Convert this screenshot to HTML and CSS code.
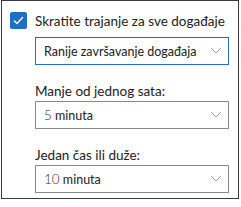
FILE: index.html
```html
<!DOCTYPE html>
<html lang="sr">

<head>
    <meta charset="UTF-8">
    <meta name="viewport" content="width=device-width, initial-scale=1.0">
    <title>Skratite trajanje</title>
    <link rel="stylesheet" href="styles.css">
</head>

<body>
    <div class="panel">
        <label class="check-row">
            <span class="checkbox">
                <svg width="11" height="9" viewBox="0 0 11 9">
                    <path d="M1 4.5l3 3 6-6.5" fill="none" stroke="#ffffff" stroke-width="1.4" />
                </svg>
            </span>
            <span class="check-label">Skratite trajanje za sve događaje</span>
        </label>

        <div class="group">
            <div class="select select-active">
                <span>Ranije završavanje događaja</span>
                <svg class="chevron" width="12" height="7" viewBox="0 0 12 7">
                    <path d="M1 1l5 5 5-5" fill="none" stroke="#a0a0a0" stroke-width="1" />
                </svg>
            </div>

            <div class="field-label">Manje od jednog sata:</div>
            <div class="select">
                <span><span class="num">5</span> minuta</span>
                <svg class="chevron" width="12" height="7" viewBox="0 0 12 7">
                    <path d="M1 1l5 5 5-5" fill="none" stroke="#a0a0a0" stroke-width="1" />
                </svg>
            </div>

            <div class="field-label">Jedan čas ili duže:</div>
            <div class="select">
                <span><span class="num">10</span> minuta</span>
                <svg class="chevron" width="12" height="7" viewBox="0 0 12 7">
                    <path d="M1 1l5 5 5-5" fill="none" stroke="#a0a0a0" stroke-width="1" />
                </svg>
            </div>
        </div>
    </div>
</body>

</html>
```

FILE: styles.css
```css
body {
    font-family: Lato, "Noto Sans", sans-serif;
    margin: 0;
    padding: 0;
    background-color: #ffffff;
    color: #222222;
}

.panel {
    margin-left: 1px;
    width: 228px;
    height: 186px;
    border: 1px solid #3a3a3a;
    padding: 11px 0 0 8px;
}

.check-row {
    display: flex;
    align-items: center;
    gap: 8px;
    height: 17px;
}

.checkbox {
    width: 17px;
    height: 17px;
    background-color: #1f6fc5;
    border-radius: 2px;
    display: flex;
    justify-content: center;
    align-items: center;
}

.check-label {
    font-size: 13.5px;
    line-height: 16px;
}

.group {
    margin-left: 25px;
    width: 194px;
}

.select {
    height: 26px;
    border: 1px solid #8a8a8a;
    display: flex;
    align-items: center;
    justify-content: space-between;
    padding: 0 6px 0 8px;
    font-size: 12.5px;
    white-space: nowrap;
}

.select-active {
    margin-top: 8px;
    border-color: #1f6fc5;
}

.chevron {
    margin-top: -2px;
}

.num {
    font-weight: 300;
    font-size: 13.5px;
    color: #333333;
}

.field-label {
    font-size: 13.5px;
    line-height: 16px;
    margin-top: 18px;
    margin-bottom: 2px;
}
```
